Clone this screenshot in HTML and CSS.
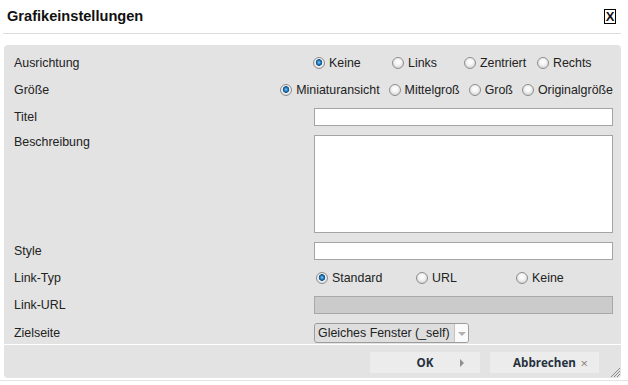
FILE: index.html
```html
<!doctype html>
<html lang="de">
<head>
  <meta charset="UTF-8">
  <meta name="viewport" content="width=device-width, initial-scale=1.0">
  <title>Grafikeinstellungen</title>
  <link rel="stylesheet" href="styles.css">
</head>

<body>
  <div class="dialog">
    <header class="dialog-head">
      <h1 class="dialog-title">Grafikeinstellungen</h1>
      <span class="dialog-close">X</span>
    </header>

    <div class="dialog-body">
      <form class="form" action="" onsubmit="return false;">
        <div class="row">
          <span class="row-label">Ausrichtung</span>
          <div class="options options-align">
            <label class="option"><input type="radio" name="align" checked> Keine</label>
            <label class="option"><input type="radio" name="align"> Links</label>
            <label class="option"><input type="radio" name="align"> Zentriert</label>
            <label class="option"><input type="radio" name="align"> Rechts</label>
          </div>
        </div>

        <div class="row">
          <span class="row-label">Größe</span>
          <div class="options options-size">
            <label class="option"><input type="radio" name="size" checked> Miniaturansicht</label>
            <label class="option"><input type="radio" name="size"> Mittelgroß</label>
            <label class="option"><input type="radio" name="size"> Groß</label>
            <label class="option"><input type="radio" name="size"> Originalgröße</label>
          </div>
        </div>

        <div class="row">
          <label class="row-label" for="title">Titel</label>
          <input class="field" type="text" id="title">
        </div>

        <div class="row">
          <label class="row-label row-label-top" for="desc">Beschreibung</label>
          <textarea class="field field-area" id="desc"></textarea>
        </div>

        <div class="row">
          <label class="row-label" for="style">Style</label>
          <input class="field" type="text" id="style">
        </div>

        <div class="row">
          <span class="row-label">Link-Typ</span>
          <div class="options options-link">
            <label class="option"><input type="radio" name="link" checked> Standard</label>
            <label class="option"><input type="radio" name="link"> URL</label>
            <label class="option"><input type="radio" name="link"> Keine</label>
          </div>
        </div>

        <div class="row">
          <label class="row-label" for="url">Link-URL</label>
          <input class="field" type="text" id="url" disabled>
        </div>

        <div class="row">
          <label class="row-label" for="target">Zielseite</label>
          <div class="select">
            <select id="target">
              <option>Gleiches Fenster (_self)</option>
              <option>Neues Fenster (_blank)</option>
            </select>
            <span class="select-arrow"></span>
          </div>
        </div>
      </form>

      <footer class="dialog-foot">
        <button class="btn btn-ok" type="button">
          <span class="btn-text">OK</span>
          <span class="btn-icon icon-arrow"></span>
        </button>
        <button class="btn btn-cancel" type="button">
          <span class="btn-text">Abbrechen</span>
          <span class="btn-icon icon-close">&times;</span>
        </button>
      </footer>

      <svg class="resize" width="11" height="11" viewBox="0 0 11 11">
        <path d="M1 10 L10 1 M4 10 L10 4 M7 10 L10 7" stroke="#8a8a8a" stroke-width="1"/>
      </svg>
    </div>
  </div>
</body>
</html>
```

FILE: styles.css
```css
*{
  box-sizing: border-box;
}

body{
  margin: 0;
  color: #222;
  font-family: "Liberation Sans", Arial, sans-serif;
  font-size: 12.4px;
  background-color: #fff;
}

.dialog{
  padding-bottom: 2px;
  border-bottom: 1px solid #e4e4e4;
}

.dialog-head{
  display: flex;
  align-items: center;
  justify-content: space-between;
  height: 34px;
  margin: 0 7px 0 3px;
  padding: 0 5px 1px 4px;
  border-bottom: 1px solid #dcdcdc;
}

.dialog-title{
  margin: 0;
  color: #111;
  font-size: 14.6px;
  font-weight: bold;
}

.dialog-close{
  width: 12px;
  height: 15px;
  border: 1px solid #000;
  color: #111;
  font-size: 13px;
  font-weight: bold;
  line-height: 13px;
  text-align: center;
}

.dialog-body{
  position: relative;
  width: 617px;
  margin: 11px 0 0 4px;
  border-radius: 4px;
  background: #e3e3e3;
}

.form{
  display: flex;
  flex-direction: column;
  gap: 9px;
  padding: 9px 8px 1px 10px;
}

.row{
  display: grid;
  grid-template-columns: 300px minmax(0, 1fr);
  align-items: center;
}

.row-label{
  line-height: 18px;
}

.row-label-top{
  align-self: start;
  line-height: 14px;
}

.options{
  display: grid;
  height: 18px;
  align-items: center;
  white-space: nowrap;
}

.options-align{
  grid-template-columns: 79px 72px 73px auto;
  margin-left: -1px;
}

.options-size{
  display: flex;
  justify-content: flex-end;
  gap: 9px;
}

.options-size .option{
  flex-shrink: 0;
}

.options-link{
  grid-template-columns: 100px 100px 100px;
  padding-left: 2px;
}

.option{
  display: flex;
  align-items: center;
}

.option input{
  appearance: none;
  width: 12px;
  height: 12px;
  margin: 0 4px 0 0;
  border: 1px solid #8e8e8e;
  border-radius: 50%;
  background: radial-gradient(circle at 50% 40%, #fff 0, #f4f4f4 3px, #d6d6d6 6px);
}

.option input:checked{
  background: radial-gradient(circle at 50% 45%, #8fd0f5 0, #2a83c4 1.6px, #0d4c86 3px, #f4f4f4 3.6px, #d6d6d6 6px);
}

.field{
  display: block;
  width: 100%;
  height: 18px;
  margin: 0;
  padding: 0 3px;
  border: 1px solid #a4a4a4;
  background: #fff;
  font: inherit;
}

.field-area{
  height: 98px;
  resize: none;
}

.field:disabled{
  border-color: #a8a8a8;
  background: #cbcbcb;
}

.select{
  width: 155px;
  height: 20px;
  display: flex;
  border: 1px solid #9c9c9c;
  border-radius: 3px;
  background: #dedede;
  overflow: hidden;
}

.select select{
  appearance: none;
  flex: 1;
  min-width: 0;
  margin: 0;
  padding: 0 0 0 3px;
  border: 0;
  background: transparent;
  color: #222;
  font: inherit;
}

.select-arrow{
  width: 14px;
  border-left: 1px solid #c4c4c4;
  background: #fafafa;
  display: flex;
  align-items: center;
  justify-content: center;
}

.select-arrow::after{
  content: "";
  border-top: 4px solid #b0b0b0;
  border-left: 4px solid transparent;
  border-right: 4px solid transparent;
  margin-top: 2px;
}

.dialog-foot{
  display: flex;
  justify-content: flex-end;
  gap: 10px;
  height: 34px;
  padding: 7px 22px 0 0;
  border-top: 1px solid #fff;
}

.btn{
  display: grid;
  grid-template-columns: 1fr auto 1fr;
  align-items: center;
  height: 21px;
  padding: 0;
  border: 0;
  background: #ececec;
  color: #26313d;
  font-family: "Open Sans", "Liberation Sans", sans-serif;
  font-size: 11.6px;
  font-weight: bold;
}

.btn::before{
  content: "";
}

.btn-ok{
  width: 110px;
}

.btn-cancel{
  width: 109px;
}

.btn-icon{
  justify-self: end;
}

.icon-arrow{
  margin-right: 16px;
  border-left: 4px solid #8f8f8f;
  border-top: 4px solid transparent;
  border-bottom: 4px solid transparent;
}

.icon-close{
  margin-right: 11px;
  color: #8c7f70;
  font-weight: normal;
  font-size: 13px;
}

.resize{
  position: absolute;
  right: 0;
  bottom: 0;
}
```
